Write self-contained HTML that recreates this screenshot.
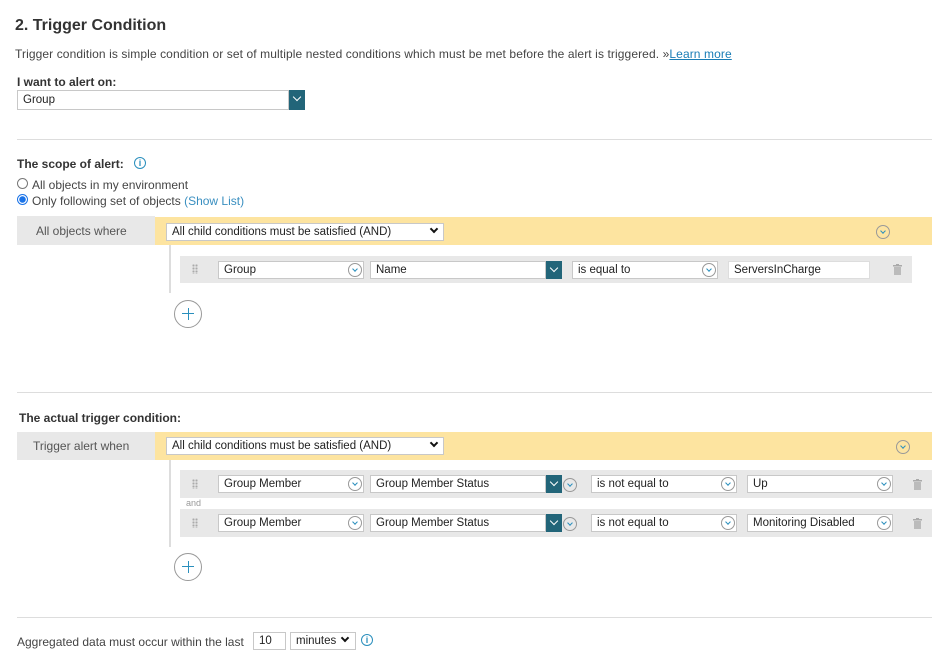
<!DOCTYPE html>
<html><head><meta charset="utf-8"><style>
*{box-sizing:border-box;margin:0;padding:0}
body{width:948px;height:642px;overflow:hidden;background:#fff;font-family:"Liberation Sans",Arial,sans-serif;color:#333;position:relative;font-size:12px}
.a{position:absolute;white-space:nowrap;line-height:14px}
.hr{position:absolute;left:17px;width:915px;height:1px;background:#ddd}
.sel{position:absolute;background:#fff;border:1px solid #c8c8c8;font-size:11.5px;color:#222;padding-left:5px;line-height:16px;height:18px;white-space:nowrap}
.teal{position:absolute;background:#226579;}
.teal:after{content:"";position:absolute;left:5px;top:4px;width:5px;height:5px;border-right:1.5px solid #fff;border-bottom:1.5px solid #fff;transform:rotate(45deg)}
.ci{position:absolute;width:14px;height:14px;border:1px solid #999;border-radius:50%}
.ci:after{content:"";position:absolute;left:4px;top:2.5px;width:3px;height:3px;border-right:1.3px solid #2a8fbd;border-bottom:1.3px solid #2a8fbd;transform:rotate(45deg)}
.gray{position:absolute;background:#e8e8e8}
.yel{position:absolute;background:#fde4a0}
.chev{position:absolute;width:6px;height:6px;border-right:2px solid #111;border-bottom:2px solid #111;transform:rotate(45deg)}
.drag{position:absolute;width:6px;height:10px;background-image:radial-gradient(circle,#aaa 1px,transparent 1.2px);background-size:3px 3px}
.plus{position:absolute;width:28px;height:28px;border:1.5px solid #999;border-radius:50%}
.plus:before{content:"";position:absolute;left:7px;top:12px;width:12px;height:1.3px;background:#2a8fbd}
.plus:after{content:"";position:absolute;left:12.5px;top:6.5px;width:1.3px;height:12px;background:#2a8fbd}
.trash{position:absolute;width:9px;height:11px}
.vl{position:absolute;width:2px;background:#ddd}
.info{position:absolute;width:12px;height:12px;border:1px solid #2a8fbd;border-radius:50%;color:#2a8fbd;font-size:9px;line-height:10px;text-align:center;font-weight:bold}
.radio{position:absolute;width:11px;height:11px;border:1px solid #777;border-radius:50%;background:#fff}
</style></head><body>
<div class="a" style="left:15px;top:17px;font-size:16px;line-height:18px;font-weight:bold;color:#333">2. Trigger Condition</div>
<div class="a" style="left:15px;top:47px;font-size:12px;letter-spacing:0.1px;color:#444">Trigger condition is simple condition or set of multiple nested conditions which must be met before the alert is triggered. »<span style="color:#1a7db6;text-decoration:underline">Learn more</span></div>
<div class="a" style="left:17px;top:75px;font-weight:bold;font-size:12px">I want to alert on:</div>
<div class="sel" style="left:17px;top:90px;width:272px;height:20px;line-height:18px">Group</div>
<div class="teal" style="left:289px;top:90px;width:16px;height:20px"></div>
<div class="hr" style="top:139px"></div>

<div class="a" style="left:17px;top:157px;font-weight:bold">The scope of alert:</div>
<div class="info" style="left:134px;top:157px">i</div>
<div class="radio" style="left:17px;top:178px"></div>
<div class="a" style="left:32px;top:178px;color:#444">All objects in my environment</div>
<div class="radio" style="left:17px;top:194px;border-color:#1a73e8;background:radial-gradient(circle,#1a73e8 3px,#fff 3.5px)"></div>
<div class="a" style="left:32px;top:194px;color:#444">Only following set of objects <span style="color:#3a8fc0">(Show List)</span></div>

<div class="gray" style="left:17px;top:216px;width:138px;height:29px"></div>
<div class="a" style="left:36px;top:224px;color:#555">All objects where</div>
<div class="yel" style="left:155px;top:217px;width:777px;height:28px"></div>
<div class="sel" style="left:166px;top:223px;width:278px">All child conditions must be satisfied (AND)</div>
<div class="chev" style="left:431px;top:226px"></div>
<div class="ci" style="left:876px;top:225px"></div>
<div class="vl" style="left:169px;top:245px;height:48px"></div>
<div class="gray" style="left:180px;top:256px;width:732px;height:27px"></div>
<div class="drag" style="left:192px;top:264px"></div>
<div class="sel" style="left:218px;top:261px;width:146px">Group</div>
<div class="ci" style="left:348px;top:263px"></div>
<div class="sel" style="left:370px;top:261px;width:176px">Name</div>
<div class="teal" style="left:546px;top:261px;width:16px;height:18px"></div>
<div class="sel" style="left:572px;top:261px;width:146px">is equal to</div>
<div class="ci" style="left:702px;top:263px"></div>
<div class="sel" style="left:728px;top:261px;width:142px;border-color:#ddd">ServersInCharge</div>
<svg class="trash" style="left:893px;top:264px" viewBox="0 0 9 11"><rect x="0" y="1" width="9" height="1.5" fill="#aaa"/><rect x="3" y="0" width="3" height="1" fill="#aaa"/><rect x="1" y="3" width="7" height="8" fill="#bbb"/></svg>
<div class="plus" style="left:174px;top:300px"></div>

<div class="hr" style="top:392px"></div>
<div class="a" style="left:19px;top:411px;font-weight:bold">The actual trigger condition:</div>
<div class="gray" style="left:17px;top:432px;width:138px;height:28px"></div>
<div class="a" style="left:33px;top:439px;color:#555">Trigger alert when</div>
<div class="yel" style="left:155px;top:432px;width:777px;height:28px"></div>
<div class="sel" style="left:166px;top:437px;width:278px">All child conditions must be satisfied (AND)</div>
<div class="chev" style="left:431px;top:440px"></div>
<div class="ci" style="left:896px;top:440px"></div>
<div class="vl" style="left:169px;top:460px;height:87px"></div>

<div class="gray" style="left:180px;top:470px;width:752px;height:28px"></div>
<div class="drag" style="left:192px;top:479px"></div>
<div class="sel" style="left:218px;top:475px;width:146px">Group Member</div>
<div class="ci" style="left:348px;top:477px"></div>
<div class="sel" style="left:370px;top:475px;width:176px">Group Member Status</div>
<div class="teal" style="left:546px;top:475px;width:16px;height:18px"></div>
<div class="ci" style="left:563px;top:478px"></div>
<div class="sel" style="left:591px;top:475px;width:146px">is not equal to</div>
<div class="ci" style="left:721px;top:477px"></div>
<div class="sel" style="left:747px;top:475px;width:146px">Up</div>
<div class="ci" style="left:877px;top:477px"></div>
<svg class="trash" style="left:913px;top:479px" viewBox="0 0 9 11"><rect x="0" y="1" width="9" height="1.5" fill="#aaa"/><rect x="3" y="0" width="3" height="1" fill="#aaa"/><rect x="1" y="3" width="7" height="8" fill="#bbb"/></svg>
<div class="a" style="left:186px;top:498px;font-size:9px;line-height:10px;color:#999">and</div>

<div class="gray" style="left:180px;top:509px;width:752px;height:28px"></div>
<div class="drag" style="left:192px;top:518px"></div>
<div class="sel" style="left:218px;top:514px;width:146px">Group Member</div>
<div class="ci" style="left:348px;top:516px"></div>
<div class="sel" style="left:370px;top:514px;width:176px">Group Member Status</div>
<div class="teal" style="left:546px;top:514px;width:16px;height:18px"></div>
<div class="ci" style="left:563px;top:517px"></div>
<div class="sel" style="left:591px;top:514px;width:146px">is not equal to</div>
<div class="ci" style="left:721px;top:516px"></div>
<div class="sel" style="left:747px;top:514px;width:146px">Monitoring Disabled</div>
<div class="ci" style="left:877px;top:516px"></div>
<svg class="trash" style="left:913px;top:518px" viewBox="0 0 9 11"><rect x="0" y="1" width="9" height="1.5" fill="#aaa"/><rect x="3" y="0" width="3" height="1" fill="#aaa"/><rect x="1" y="3" width="7" height="8" fill="#bbb"/></svg>
<div class="plus" style="left:174px;top:553px"></div>

<div class="hr" style="top:617px"></div>
<div class="a" style="left:17px;top:635px;color:#444">Aggregated data must occur within the last</div>
<div class="sel" style="left:253px;top:632px;width:33px">10</div>
<div class="sel" style="left:290px;top:632px;width:66px">minutes</div>
<div class="chev" style="left:342px;top:635px"></div>
<div class="info" style="left:361px;top:634px">i</div>
</body></html>
